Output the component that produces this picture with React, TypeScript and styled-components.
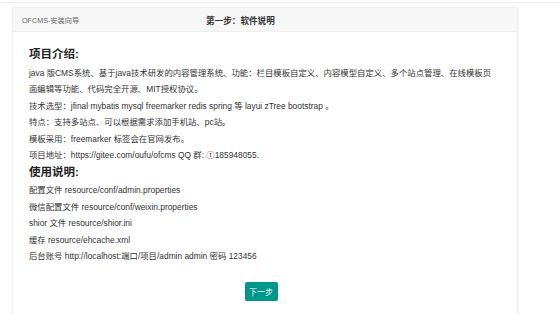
import styled, { createGlobalStyle } from 'styled-components';

const GlobalStyle = createGlobalStyle`
  html, body {
    margin: 0;
    padding: 0;
    background: #fff;
  }
  body {
    font-family: 'Liberation Sans', 'Noto Sans CJK SC', sans-serif;
    color: #333;
  }
`;

const TopRule = styled.div`
  height: 2px;
  border-bottom: 1px solid #ececec;
`;

const Card = styled.div`
  width: 506px;
  margin: 4px 0 0 12px;
  box-sizing: border-box;
  border: 1px solid #eeeeee;
  box-shadow: 1px 0 1px rgba(0, 0, 0, 0.04);
  background: #fff;
`;

const CardHeader = styled.div`
  display: flex;
  align-items: center;
  height: 23px;
  padding: 0 9px;
  background: #f7f7f7;
  border-bottom: 1px solid #f0f0f0;
`;

const Brand = styled.span`
  font-size: 7.2px;
  color: #666;
  width: 184px;
`;

const StepTitle = styled.span`
  font-size: 8.6px;
  font-weight: bold;
  color: #333;
`;

const CardBody = styled.div`
  padding: 14px 19px 14px 16px;
`;

const SectionTitle = styled.h3`
  margin: 0 0 2.5px;
  font-size: 11.5px;
  line-height: 16px;
  font-weight: bold;
  color: #222;
`;

const Line = styled.p`
  margin: 0;
  font-size: 8.4px;
  line-height: 16.5px;
  color: #333;
`;

const Footer = styled.div`
  display: flex;
  justify-content: center;
  padding-right: 5px;
  margin-top: 17px;
`;

const NextButton = styled.button`
  width: 33px;
  height: 19px;
  padding: 0;
  border: none;
  border-radius: 2px;
  background: #009688;
  color: #fff;
  font-family: inherit;
  font-size: 8px;
  cursor: pointer;
`;

const intro = [
  'java 版CMS系统、基于java技术研发的内容管理系统、功能：栏目模板自定义、内容模型自定义、多个站点管理、在线模板页面编辑等功能、代码完全开源、MIT授权协议。',
  '技术选型：jfinal mybatis mysql freemarker redis spring 等 layui zTree bootstrap 。',
  '特点：支持多站点、可以根据需求添加手机站、pc站。',
  '模板采用：freemarker 标签会在官网发布。',
  '项目地址：https://gitee.com/oufu/ofcms QQ 群: ①185948055.',
];

const usage = [
  '配置文件 resource/conf/admin.properties',
  '微信配置文件 resource/conf/weixin.properties',
  'shior 文件 resource/shior.ini',
  '缓存 resource/ehcache.xml',
  '后台账号 http://localhost:端口/项目/admin admin 密码 123456',
];

export default function App() {
  return (
    <>
      <GlobalStyle />
      <TopRule />
      <Card>
        <CardHeader>
          <Brand>OFCMS-安装向导</Brand>
          <StepTitle>第一步：软件说明</StepTitle>
        </CardHeader>
        <CardBody>
          <SectionTitle>项目介绍:</SectionTitle>
          {intro.map((t, i) => (
            <Line key={`in-${i}`}>{t}</Line>
          ))}
          <SectionTitle>使用说明:</SectionTitle>
          {usage.map((t, i) => (
            <Line key={`us-${i}`}>{t}</Line>
          ))}
          <Footer>
            <NextButton>下一步</NextButton>
          </Footer>
        </CardBody>
      </Card>
    </>
  );
}
